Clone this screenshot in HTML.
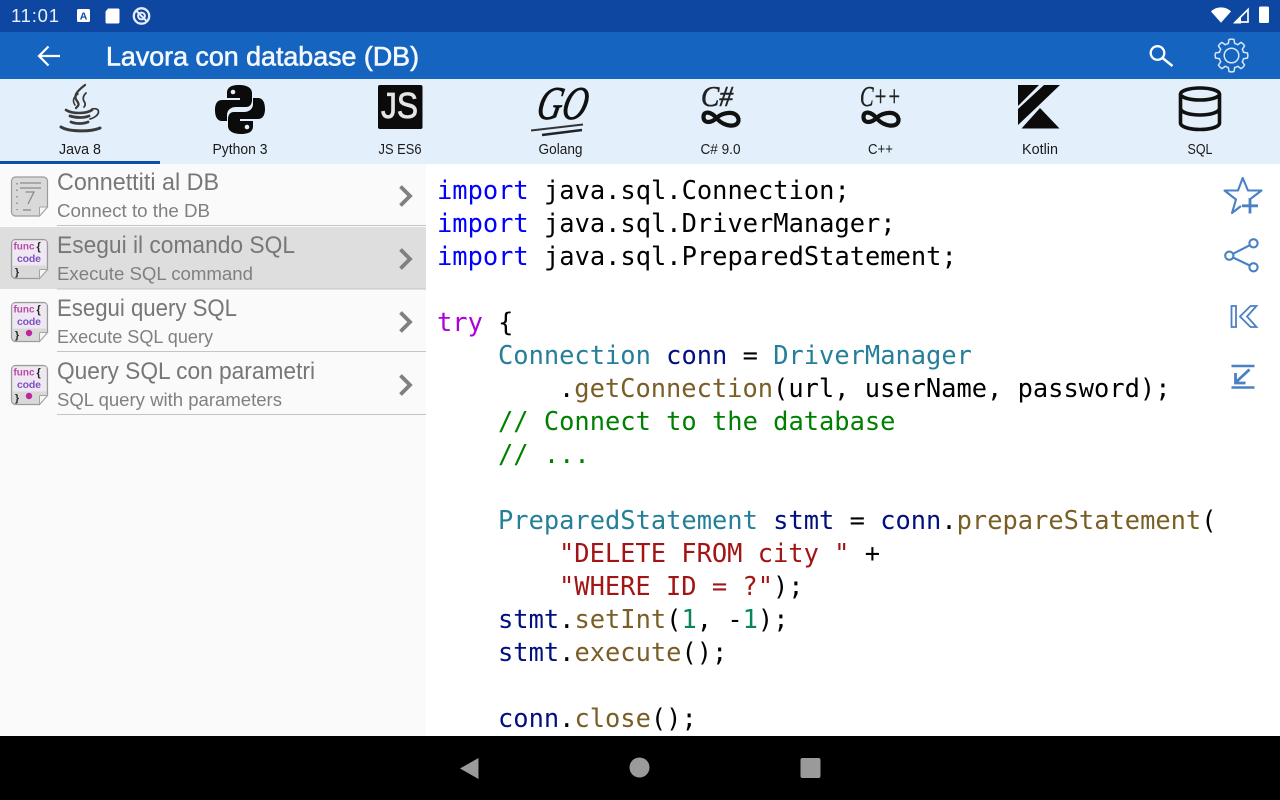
<!DOCTYPE html>
<html><head><meta charset="utf-8"><style>
html,body{margin:0;padding:0;width:1280px;height:800px;overflow:hidden;background:#fff}
svg{display:block}
.r{font-family:"Liberation Sans",sans-serif}
.m{font-family:"DejaVu Sans Mono","Liberation Mono",monospace;font-size:25.4px;fill:#000;white-space:pre}
.tab{font-family:"Liberation Sans",sans-serif;font-size:14.5px;fill:#1a1a1a;text-anchor:middle}
.t{font-family:"Liberation Sans",sans-serif;font-size:24px;fill:#777}
.s{font-family:"Liberation Sans",sans-serif;font-size:18.5px;fill:#808080}
.k{fill:#0000ff}.p{fill:#af00db}.c{fill:#267f99}.v{fill:#001080}.f{fill:#795e26}.g{fill:#008000}.q{fill:#a31515}.n{fill:#098658}
</style></head><body>
<svg width="1280" height="800" viewBox="0 0 1280 800" xmlns="http://www.w3.org/2000/svg">
<defs>
<g id="doc">
<path d="M4 0H32a4 4 0 0 1 4 4V30L28 39H4a4 4 0 0 1-4-4V4a4 4 0 0 1 4-4Z" fill="#d9d9d9" stroke="#9a9a9a" stroke-width="1.200"/>
<path d="M36 30H29a1 1 0 0 0-1 1V39Z" fill="#f6f6f6" stroke="#a5a5a5" stroke-width="1"/>
</g>
<g id="fn">
<use href="#doc"/>
<path d="M2 1H34a1 1 0 0 1 1 1V26H1V2a1 1 0 0 1 1-1Z" fill="#efe8f2"/>
<text x="2" y="10" font-family="Liberation Sans" font-weight="700" font-size="10.500" fill="#b84aa6" textLength="21" lengthAdjust="spacingAndGlyphs">func</text>
<text x="25" y="10.500" font-family="Liberation Sans" font-weight="700" font-size="11" fill="#222">{</text>
<text x="5.500" y="22.500" font-family="Liberation Sans" font-weight="700" font-size="10.500" fill="#7a52c0" textLength="24">code</text>
<text x="3.500" y="36" font-family="Liberation Sans" font-weight="700" font-size="10.500" fill="#222">}</text>
</g>
<path id="chev" d="M1.500 1.500L11 11L1.500 20.500" fill="none" stroke="#808080" stroke-width="3.800"/>
<path id="inf" d="M14 8C9 2 1 0 1 7C1 14 9 13 14 8C20 2 34 0 36 9C37 18 22 18 14 8Z" fill="none" stroke="#111" stroke-width="4.200"/>
<path id="gt" d="M-4.780 -11.550L-3.200 -12L-2.500 -16Q0 -16.800 2.500 -16L3.200 -12L4.780 -11.550" fill="none" stroke="#d8e6f7" stroke-width="1.500" stroke-linejoin="round"/>
</defs>

<rect width="1280" height="800" fill="#fff"/>
<rect width="1280" height="32" fill="#0d47a1"/>
<rect y="32" width="1280" height="47" fill="#1565c0"/>
<rect y="79" width="1280" height="85" fill="#e3f0fc"/>
<rect y="164" width="426" height="572" fill="#fafafa"/>

<!-- status bar -->
<text class="r" x="11" y="22" font-size="18.500" fill="#eaf0f9" textLength="48">11:01</text>
<rect x="77" y="9" width="13" height="13" rx="1.500" fill="#fff"/>
<text class="r" x="79.700" y="19.500" font-size="10.500" font-weight="700" fill="#0d47a1">A</text>
<path d="M108 8.500H118a1.500 1.500 0 0 1 1.500 1.500V22a1.500 1.500 0 0 1-1.500 1.500H107a1.500 1.500 0 0 1-1.500-1.500V11.500Z" fill="#fff"/>
<circle cx="141.500" cy="16" r="7.700" fill="none" stroke="#e6edf7" stroke-width="2.300"/>
<circle cx="141.500" cy="16" r="3.400" fill="none" stroke="#e6edf7" stroke-width="2"/>
<path d="M136 10.500L147 21.500" stroke="#e6edf7" stroke-width="2"/>
<path d="M1211 11.500C1216 6 1226 6 1231 11.500L1221 22.800Z" fill="#fff"/>
<path d="M1248 9.500V22H1235.500Z" fill="none" stroke="#fff" stroke-width="1.700"/>
<path d="M1233 23.500L1241 15.500V23.500Z" fill="#fff"/>
<path d="M1260.500 6.500H1267.500A1.500 1.500 0 0 1 1269 8V21.500A1.500 1.500 0 0 1 1267.500 23H1260.500A1.500 1.500 0 0 1 1259 21.500V8A1.500 1.500 0 0 1 1260.500 6.500Z" fill="#fff"/>

<!-- app bar -->
<path d="M39 56H60M48.500 46.500L39 56L48.500 65.500" fill="none" stroke="#fff" stroke-width="2.200"/>
<text class="r" x="106" y="65.500" font-size="26.500" fill="#f4f8fd" stroke="#f4f8fd" stroke-width=".6" textLength="313" lengthAdjust="spacingAndGlyphs">Lavora con database (DB)</text>
<circle cx="1157.500" cy="53" r="6.800" fill="none" stroke="#fff" stroke-width="2.300"/>
<path d="M1162.500 58L1172.500 66" stroke="#fff" stroke-width="2.500"/>
<g transform="translate(1231.500 55.500)">
<circle r="7.300" fill="none" stroke="#d8e6f7" stroke-width="1.500"/>
<use href="#gt"/><use href="#gt" transform="rotate(45)"/><use href="#gt" transform="rotate(90)"/><use href="#gt" transform="rotate(135)"/>
<use href="#gt" transform="rotate(180)"/><use href="#gt" transform="rotate(225)"/><use href="#gt" transform="rotate(270)"/><use href="#gt" transform="rotate(315)"/>
</g>

<!-- Java -->
<g fill="none" stroke="#3a3a3a" stroke-linecap="round">
<path d="M85 85C77 91 73 96 77 101C80 105 78 106 76 108" stroke-width="2.300"/>
<path d="M86 93C82 97 83 100 85 103C85.500 105 85 106 84 107" stroke-width="1.800"/>
<path d="M78 94C72 98 73 102 75 105" stroke-width="1.600"/>
<path d="M66 110C72 114 86 114 92 110" stroke-width="2.600"/>
<path d="M70 116C76 118 84 118 89 116" stroke-width="2.800"/>
<path d="M71 122C76 124 83 124 88 122" stroke-width="2.800"/>
<path d="M92 109C101 107 101 116 90 119" stroke-width="1.700"/>
<path d="M61 127C69 132 91 132 100 128" stroke-width="3"/>
</g>
<!-- Python -->
<path d="M239 85C229 85 227 89 227 93V98H240V100H222C216 100 215 106 215 110C215 116 217 121 222 121H227V115C227 110 231 107 236 107H246C250 107 252 104 252 100V93C252 88 247 85 239 85Z" fill="#0b0b0b"/>
<path d="M241 134C251 134 253 130 253 126V121H240V119H258C264 119 265 113 265 109C265 103 263 98 258 98H253V104C253 109 249 112 244 112H234C230 112 228 115 228 119V126C228 131 233 134 241 134Z" fill="#0b0b0b"/>
<circle cx="233" cy="92" r="2.300" fill="#e3f0fc"/><circle cx="247" cy="127" r="2.300" fill="#e3f0fc"/>
<!-- JS -->
<rect x="378" y="85" width="44.500" height="44" rx="2" fill="#0b0b0b"/>
<text class="r" x="381" y="118" font-size="36" fill="#e4e4e4" stroke="#e4e4e4" stroke-width=".8" textLength="37" lengthAdjust="spacingAndGlyphs">JS</text>
<!-- Go -->
<text transform="translate(535 119) skewX(-12)" font-family="Liberation Serif" font-style="italic" font-size="47" fill="#111" stroke="#111" stroke-width=".8" textLength="50" lengthAdjust="spacingAndGlyphs">GO</text>
<path d="M531 130.500L583 124.500" stroke="#333" stroke-width="2" fill="none"/>
<path d="M542 135L582 130" stroke="#222" stroke-width="2.400" fill="none"/>
<!-- C# -->
<text x="701" y="106" font-family="Liberation Serif" font-style="italic" font-size="29" fill="#222" stroke="#222" stroke-width=".6" textLength="32" lengthAdjust="spacingAndGlyphs">C#</text>
<use href="#inf" x="702.500" y="110"/>
<!-- C++ -->
<text x="860" y="106" font-family="Liberation Serif" font-style="italic" font-size="29" fill="#222" stroke="#222" stroke-width=".5" textLength="41" lengthAdjust="spacingAndGlyphs">C++</text>
<use href="#inf" x="862.500" y="110"/>
<!-- Kotlin -->
<path d="M1018 85H1039L1018 106ZM1044 85H1060L1036 108L1018 125V109ZM1021.500 128.500H1059.500L1040 108Z" fill="#0b0b0b"/>
<!-- SQL -->
<g fill="none" stroke="#111" stroke-width="3.600">
<ellipse cx="1200" cy="94" rx="19.500" ry="6"/>
<path d="M1180.500 94V123C1180.500 127 1190 129.500 1200 129.500S1219.500 127 1219.500 123V94M1180.500 108C1180.500 112.500 1190 115 1200 115S1219.500 112.500 1219.500 108"/>
</g>

<text class="tab" x="80" y="154" textLength="42" lengthAdjust="spacingAndGlyphs">Java 8</text>
<text class="tab" x="240" y="154" textLength="55" lengthAdjust="spacingAndGlyphs">Python 3</text>
<text class="tab" x="400" y="154" textLength="43" lengthAdjust="spacingAndGlyphs">JS ES6</text>
<text class="tab" x="560.500" y="154" textLength="44" lengthAdjust="spacingAndGlyphs">Golang</text>
<text class="tab" x="720.500" y="154" textLength="40" lengthAdjust="spacingAndGlyphs">C# 9.0</text>
<text class="tab" x="880.500" y="154" textLength="25" lengthAdjust="spacingAndGlyphs">C++</text>
<text class="tab" x="1040" y="154" textLength="36" lengthAdjust="spacingAndGlyphs">Kotlin</text>
<text class="tab" x="1200" y="154" textLength="25" lengthAdjust="spacingAndGlyphs">SQL</text>
<rect y="161" width="160" height="3" fill="#0d4ea6"/>

<!-- list -->
<rect y="227" width="426" height="62" fill="#dedede"/>
<g fill="#c4c4c4">
<rect x="57" y="225" width="369" height="1"/><rect x="57" y="288.500" width="369" height="1"/>
<rect x="57" y="351" width="369" height="1"/><rect x="57" y="414" width="369" height="1"/>
</g>
<use href="#doc" x="11.500" y="177"/>
<g stroke="#8a8a8a" fill="none">
<path d="M20 183H41M20 188H41" stroke-width="1.300"/>
<path d="M17 183V210" stroke-dasharray="1.500 5" stroke-width="1.500"/>
<path d="M23 210H31" stroke-width="1.300"/>
<path d="M25.500 192H34L28 204" stroke-width="1.300"/>
</g>
<use href="#fn" x="11.500" y="239.500"/>
<use href="#fn" x="11.500" y="302.500"/>
<circle cx="29" cy="333" r="3.200" fill="#c0269c"/>
<use href="#fn" x="11.500" y="365.500"/>
<circle cx="29" cy="396" r="3.200" fill="#c0269c"/>

<text class="t" x="57" y="190" textLength="162" lengthAdjust="spacingAndGlyphs">Connettiti al DB</text>
<text class="s" x="57" y="217" textLength="153" lengthAdjust="spacingAndGlyphs">Connect to the DB</text>
<text class="t" x="57" y="253" textLength="238" lengthAdjust="spacingAndGlyphs">Esegui il comando SQL</text>
<text class="s" x="57" y="280" textLength="196" lengthAdjust="spacingAndGlyphs">Execute SQL command</text>
<text class="t" x="57" y="316" textLength="180" lengthAdjust="spacingAndGlyphs">Esegui query SQL</text>
<text class="s" x="57" y="343" textLength="156" lengthAdjust="spacingAndGlyphs">Execute SQL query</text>
<text class="t" x="57" y="379" textLength="258" lengthAdjust="spacingAndGlyphs">Query SQL con parametri</text>
<text class="s" x="57" y="406" textLength="225" lengthAdjust="spacingAndGlyphs">SQL query with parameters</text>
<use href="#chev" x="399" y="185"/>
<use href="#chev" x="399" y="248"/>
<use href="#chev" x="399" y="311"/>
<use href="#chev" x="399" y="374"/>

<!-- code -->
<g class="m" xml:space="preserve">
<text class="m" x="437" y="199"><tspan class="k">import</tspan> java.sql.Connection;</text>
<text class="m" x="437" y="232"><tspan class="k">import</tspan> java.sql.DriverManager;</text>
<text class="m" x="437" y="265"><tspan class="k">import</tspan> java.sql.PreparedStatement;</text>
<text class="m" x="437" y="331"><tspan class="p">try</tspan> {</text>
<text class="m" x="498" y="364"><tspan class="c">Connection</tspan> <tspan class="v">conn</tspan> = <tspan class="c">DriverManager</tspan></text>
<text class="m" x="559" y="397">.<tspan class="f">getConnection</tspan>(url, userName, password);</text>
<text class="m g" x="498" y="430">// Connect to the database</text>
<text class="m g" x="498" y="463">// ...</text>
<text class="m" x="498" y="529"><tspan class="c">PreparedStatement</tspan> <tspan class="v">stmt</tspan> = <tspan class="v">conn</tspan>.<tspan class="f">prepareStatement</tspan>(</text>
<text class="m" x="559" y="562"><tspan class="q">"DELETE FROM city "</tspan> +</text>
<text class="m" x="559" y="595"><tspan class="q">"WHERE ID = ?"</tspan>);</text>
<text class="m" x="498" y="628"><tspan class="v">stmt</tspan>.<tspan class="f">setInt</tspan>(<tspan class="n">1</tspan>, -<tspan class="n">1</tspan>);</text>
<text class="m" x="498" y="661"><tspan class="v">stmt</tspan>.<tspan class="f">execute</tspan>();</text>
<text class="m" x="498" y="727"><tspan class="v">conn</tspan>.<tspan class="f">close</tspan>();</text>
</g>

<!-- side actions -->
<g fill="none" stroke="#4a80c4" stroke-width="2.100">
<path d="M1251 198.500L1261.500 190.500H1248L1242.700 178L1238 190.500H1224.500L1236 199.500L1232 213L1241 206" stroke-linejoin="round"/>
<path d="M1242 205.800H1258M1250 198V213.500" stroke-width="2.800"/>
<circle cx="1253.500" cy="243.300" r="4.100"/><circle cx="1229.300" cy="255.700" r="4.100"/><circle cx="1253.500" cy="267.300" r="4.100"/>
<path d="M1233 253.800L1249.800 245.200M1233 257.500L1249.800 265.500"/>
<path d="M1231.500 306H1236V327H1231.500ZM1250.500 306H1256.500L1247 316.500L1256.500 327H1250.500L1240 316.500Z" stroke-width="1.800"/>
<path d="M1231.500 366H1254.500M1231.500 387.500H1254.500" stroke-width="2.600"/>
<path d="M1249.500 369.500L1235.500 382.500M1235.500 373V383H1245.500" stroke-width="2.800"/>
</g>

<!-- nav bar -->
<rect y="736" width="1280" height="64" fill="#000"/>
<path d="M478.500 758V779L460 768.500Z" fill="#9a9a9a"/>
<circle cx="639.500" cy="767.500" r="10" fill="#9a9a9a"/>
<rect x="800.500" y="758" width="20" height="20" rx="2" fill="#9a9a9a"/>
</svg>
</body></html>
